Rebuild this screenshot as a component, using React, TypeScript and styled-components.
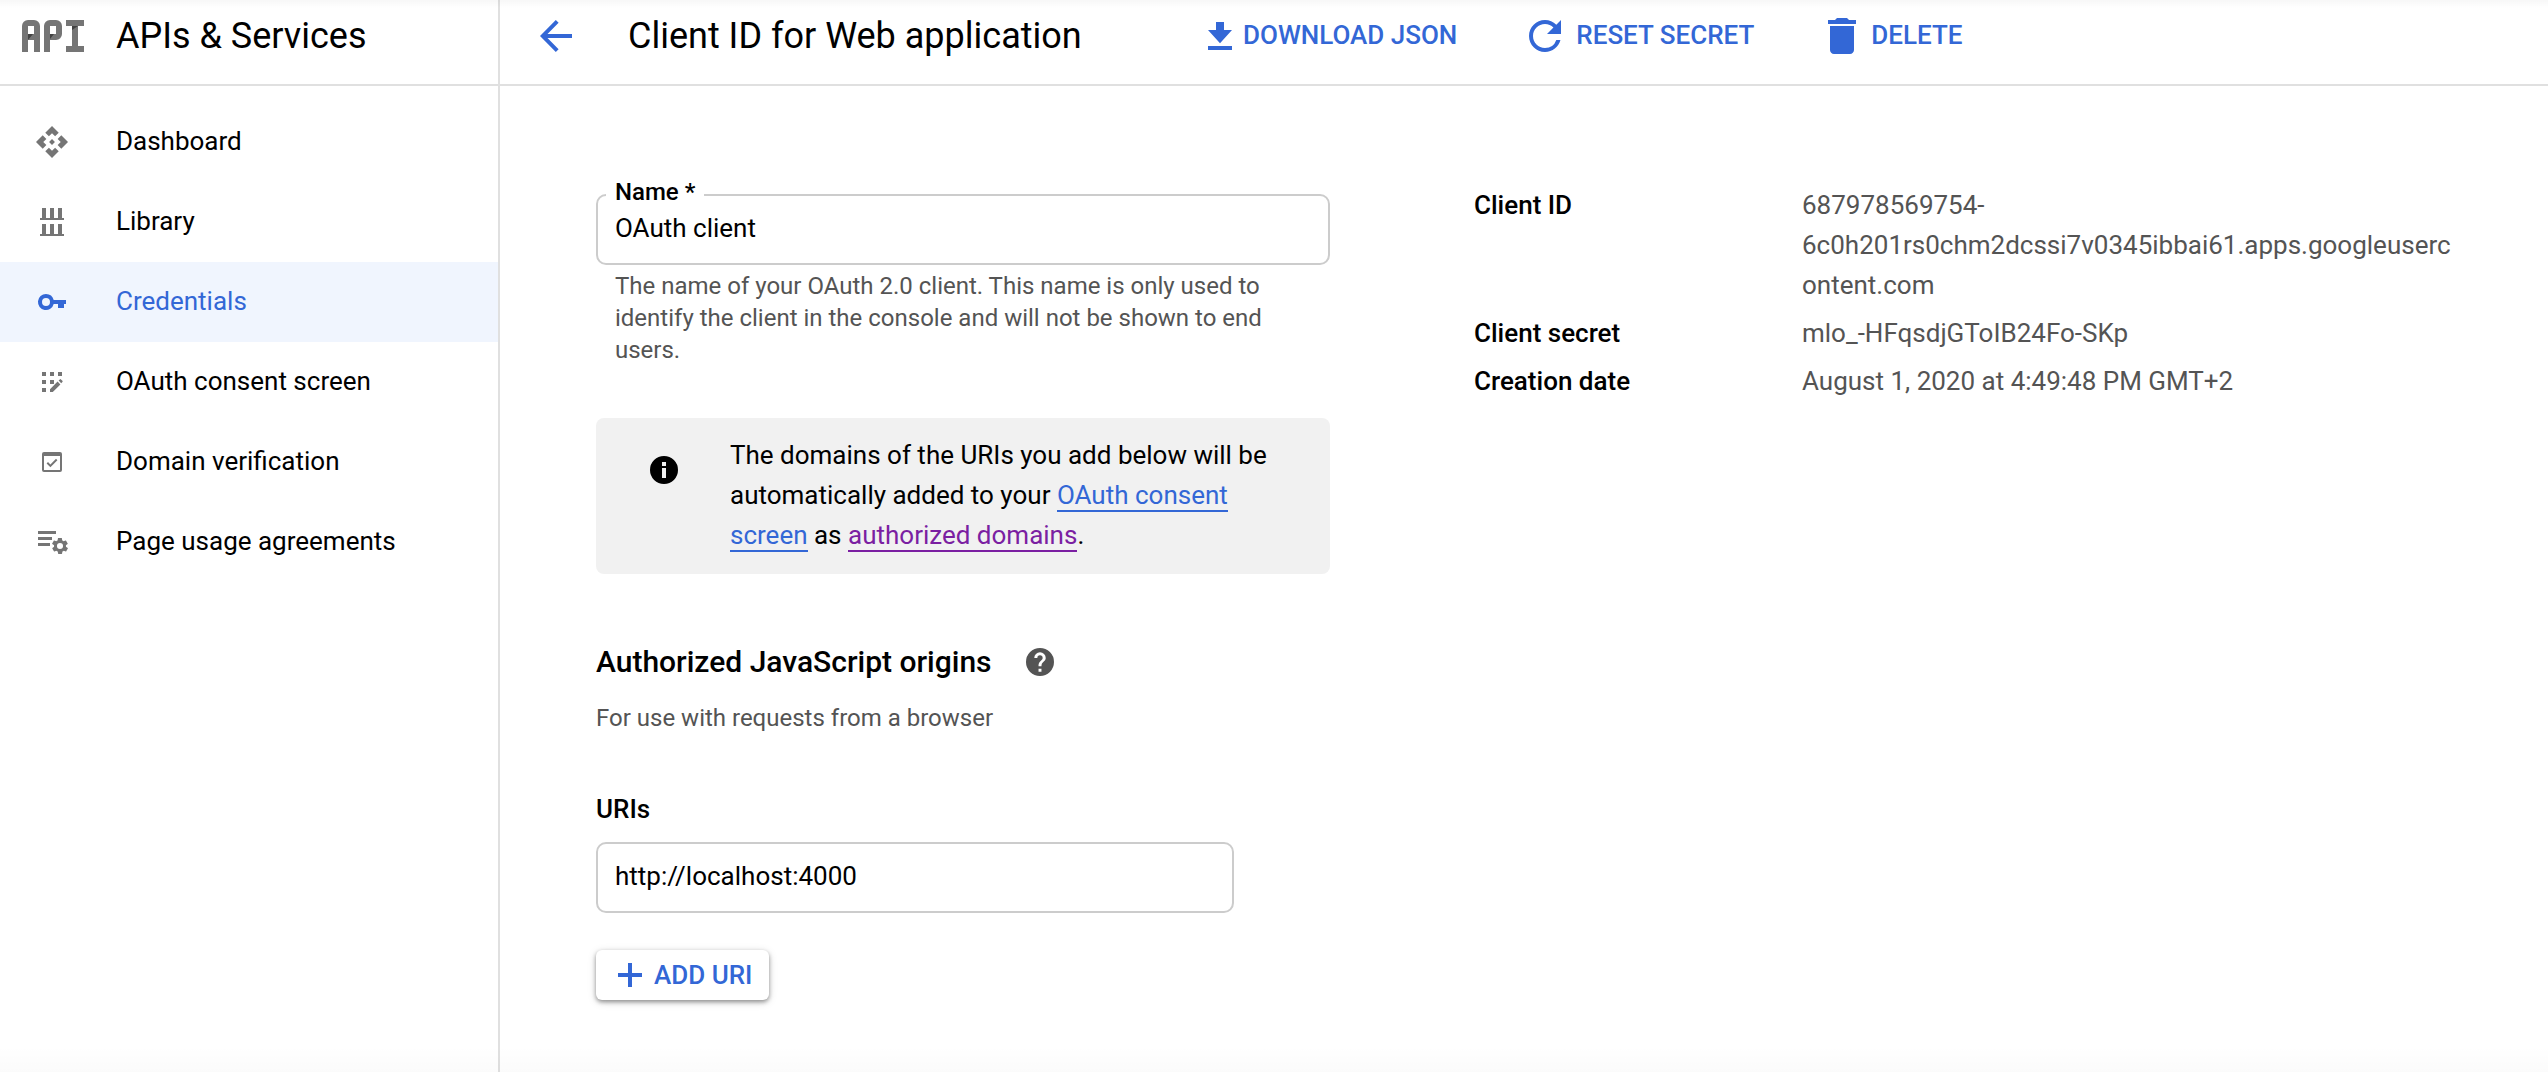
import React from "react";
import styled, { createGlobalStyle, css } from "styled-components";

const BLUE = "#3367d6";
const GREY = "#757575";
const MUTED = "#545454";
const LINE = "#e0e0e0";

const GlobalStyle = createGlobalStyle`
  * { box-sizing: border-box; }
  body {
    margin: 0;
    background: #fff;
    color: #000;
    font-family: Roboto, "Liberation Sans", sans-serif;
    font-size: 26px;
    line-height: 40px;
  }
`;

const Page = styled.div`
  position: relative;
  display: grid;
  grid-template-columns: 500px 1fr;
  height: 1072px;
  overflow: hidden;
`;
const TopShade = styled.div`
  position: absolute;
  inset: 0 0 auto 0;
  height: 8px;
  background: linear-gradient(rgba(0, 0, 0, 0.03), transparent);
`;
const BottomShade = styled.div`
  position: absolute;
  inset: auto 0 0 0;
  height: 26px;
  background: linear-gradient(transparent, rgba(0, 0, 0, 0.015));
`;
const Sidebar = styled.aside`
  border-right: 2px solid ${LINE};
`;
const bar = css`
  display: flex;
  align-items: center;
  height: 86px;
  padding-bottom: 12px;
  border-bottom: 2px solid ${LINE};
`;
const Brand = styled.div`
  ${bar}
  padding-left: 22px;
`;
const BrandName = styled.div`
  margin-left: 32px;
  font-size: 36px;
`;
const Nav = styled.nav`
  padding-top: 16px;
`;
const NavItem = styled.a<{ $active?: boolean }>`
  display: flex;
  align-items: center;
  gap: 46px;
  height: 80px;
  padding: 0 0 0 34px;
  color: ${(p) => (p.$active ? BLUE : "#000")};
  background: ${(p) => (p.$active ? "#f0f5fe" : "transparent")};
  svg { color: ${(p) => (p.$active ? BLUE : GREY)}; }
`;
const NavLabel = styled.span`
  padding-bottom: 2px;
`;
const Icon = styled.svg<{ $size: number }>`
  flex: none;
  display: block;
  width: ${(p) => p.$size}px;
  height: ${(p) => p.$size}px;
  fill: currentColor;
`;
const Logo = styled.svg`
  display: block;
  width: 62px;
  height: 32px;
`;

const Header = styled.header`
  ${bar}
  padding-left: 36px;
  color: ${BLUE};
`;
const Title = styled.h1`
  width: 578px;
  margin: 0 0 0 52px;
  color: #000;
  font-size: 36px;
  font-weight: 400;
`;
const Action = styled.button<{ $gap: number }>`
  display: flex;
  align-items: center;
  gap: ${(p) => p.$gap}px;
  margin: 0 64px 0 0;
  padding: 0;
  border: 0;
  background: none;
  color: inherit;
  font: 500 26px/40px Roboto, sans-serif;
  white-space: nowrap;
`;
const ActionLabel = styled.span`
  padding-bottom: 2px;
`;
const Content = styled.div`
  display: grid;
  grid-template-columns: 734px 1fr;
  column-gap: 144px;
  padding: 99px 0 0 96px;
`;
const Form = styled.form`
  display: flex;
  flex-direction: column;
  align-items: flex-start;
  padding-top: 9px;
`;
const Field = styled.div<{ $width: number }>`
  position: relative;
  width: ${(p) => p.$width}px;
  height: 71px;
  padding: 12px 17px;
  border: 2px solid #ccc;
  border-radius: 10px;
`;
const FieldLabel = styled.label`
  position: absolute;
  left: 8px;
  top: -20px;
  padding: 0 9px;
  background: #fff;
  font-size: 24px;
  font-weight: 500;
  line-height: 32px;
`;
const Help = styled.p`
  width: 690px;
  margin: 5px 0 0 19px;
  color: ${MUTED};
  font-size: 24px;
  line-height: 32px;
`;
const Notice = styled.div`
  display: flex;
  align-items: flex-start;
  gap: 50px;
  width: 734px;
  height: 156px;
  margin-top: 52px;
  padding: 17px 50px 0 52px;
  border-radius: 8px;
  background: #f1f1f1;
  svg { margin-top: 19px; }
`;
const NoticeText = styled.div`
  width: 570px;
`;
const Link = styled.a<{ $visited?: boolean }>`
  border-bottom: 2px solid;
  color: ${(p) => (p.$visited ? "#7b1fa2" : BLUE)};
`;
const SectionHead = styled.div`
  display: flex;
  align-items: center;
  gap: 32px;
  margin-top: 68px;
  svg { color: ${MUTED}; }
`;
const SectionTitle = styled.h2`
  margin: 0;
  font-size: 30px;
  font-weight: 500;
`;
const SectionNote = styled.p`
  margin: 16px 0 0;
  color: ${MUTED};
  font-size: 24px;
`;
const ListLabel = styled.div`
  margin: 51px 0 13px;
  font-weight: 500;
`;
const AddButton = styled.button`
  display: flex;
  align-items: center;
  gap: 12px;
  width: 173px;
  height: 50px;
  margin-top: 37px;
  padding: 0 0 0 22px;
  border: 0;
  border-radius: 6px;
  background: #fff;
  box-shadow: 0 2px 4px rgba(0, 0, 0, 0.38), 0 2px 10px rgba(0, 0, 0, 0.14);
  color: ${BLUE};
  font: 500 26px/40px Roboto, sans-serif;
  white-space: nowrap;
`;
const Details = styled.dl`
  display: grid;
  grid-template-columns: 328px 660px;
  align-content: start;
  row-gap: 8px;
  margin: 0;
`;
const Term = styled.dt`
  font-weight: 500;
`;
const Detail = styled.dd`
  margin: 0;
  color: ${MUTED};
`;

const navItems = [
  {
    label: "Dashboard",
    art: (
      <path
        transform="translate(.55 .55) scale(1.4545)"
        d="M14 12l-2 2-2-2 2-2 2 2zm-2-6l2.12 2.12 2.5-2.5L12 1 7.38 5.62l2.5 2.5L12 6zm-6 6l2.12-2.12-2.5-2.5L1 12l4.62 4.62 2.5-2.5L6 12zm12 0l-2.12 2.12 2.5 2.5L23 12l-4.62-4.62-2.5 2.5L18 12zm-6 6l-2.12-2.12-2.5 2.5L12 23l4.62-4.62-2.5-2.5L12 18z"
      />
    ),
  },
  {
    label: "Library",
    art: (
      <path d="M8 4h4v10h4V4h4v10h4V4h4v10h2v2H6v-2h2zM8 20h4v10h4V20h4v10h4V20h4v10h2v2H6v-2h2z" />
    ),
  },
  {
    label: "Credentials",
    active: true,
    art: (
      <path
        fillRule="evenodd"
        d="M12 10a8 8 0 0 1 7.7 6H32v4h-2v4h-6v-4h-4.3A8 8 0 1 1 12 10zm0 4a4 4 0 1 0 0 8 4 4 0 0 0 0-8z"
      />
    ),
  },
  {
    label: "OAuth consent screen",
    art: (
      <path d="M8 8h4v4H8zM16 8h4v4h-4zM24 8h4v4h-4zM8 16h4v4H8zM16 16h4v4h-4zM8 24h4v4H8zM16 25.2l7.6-7.6 2.8 2.8-7.6 7.6H16zM24.6 16.6l1.2-1.2q.6-.6 1.2 0l1.4 1.4q.6.6 0 1.2l-1.2 1.2z" />
    ),
  },
  {
    label: "Domain verification",
    art: (
      <path
        fillRule="evenodd"
        d="M10 8h16a2 2 0 0 1 2 2v16a2 2 0 0 1-2 2H10a2 2 0 0 1-2-2V10a2 2 0 0 1 2-2zm0 4v14h16V12zm6.4 11.2l-3.8-3.8 1.4-1.4 2.4 2.4 5.6-5.6 1.4 1.4z"
      />
    ),
  },
  {
    label: "Page usage agreements",
    art: (
      <>
        <path d="M4 7h18v3H4zM4 13h14v3H4zM4 19h12v3H4z" />
        <path
          fillRule="evenodd"
          transform="translate(16.4 12.4) scale(.8)"
          d="M19.4 13c0-.3.1-.7.1-1s0-.7-.1-1l2.1-1.6c.2-.2.2-.4.1-.6l-2-3.5c-.1-.2-.4-.3-.6-.2l-2.5 1c-.5-.4-1.1-.7-1.7-1l-.4-2.6c0-.2-.2-.4-.5-.4h-4c-.2 0-.5.2-.5.4l-.4 2.6c-.6.3-1.2.6-1.7 1l-2.5-1c-.2-.1-.5 0-.6.2l-2 3.5c-.1.2-.1.5.1.6L4.6 11c0 .3-.1.7-.1 1s0 .7.1 1l-2.1 1.6c-.2.2-.2.4-.1.6l2 3.5c.1.2.4.3.6.2l2.5-1c.5.4 1.1.7 1.7 1l.4 2.6c0 .2.3.4.5.4h4c.3 0 .5-.2.5-.4l.4-2.6c.6-.3 1.2-.6 1.7-1l2.5 1c.2.1.5 0 .6-.2l2-3.5c.1-.2.1-.5-.1-.6zM12 15.8a3.8 3.8 0 1 1 0-7.6 3.8 3.8 0 0 1 0 7.6z"
        />
      </>
    ),
  },
];

export default function App() {
  return (
    <>
      <GlobalStyle />
      <Page>
        <Sidebar>
          <Brand>
            <Logo viewBox="0 0 62 32" fill={GREY}>
              <path
                fillRule="evenodd"
                d="M0 32V6a6 6 0 0 1 6-6h6a6 6 0 0 1 6 6v26h-6V20H6v12zM6 6v8h6V6zM22 32V6a6 6 0 0 1 6-6h6a6 6 0 0 1 6 6v8a6 6 0 0 1-6 6h-6v12zM28 6v8h6V6zM44 0h18v6h-6v20h6v6H44v-6h6V6h-6z"
              />
              <path fill="#424242" d="M6 14h5l-5 6zM28 14h4l-4 5zM50 6h6l-6 4z" />
            </Logo>
            <BrandName>APIs &amp; Services</BrandName>
          </Brand>
          <Nav>
            {navItems.map((item) => (
              <NavItem key={item.label} $active={item.active}>
                <Icon $size={36} viewBox="0 0 36 36">{item.art}</Icon>
                <NavLabel>{item.label}</NavLabel>
              </NavItem>
            ))}
          </Nav>
        </Sidebar>
        <main>
          <Header>
            <Icon $size={40} viewBox="0 0 40 40">
              <path d="M36 18H11.5L22.6 6.700 19.800 4 4 20l15.800 16 2.800-2.700L11.500 22H36z" />
            </Icon>
            <Title>Client ID for Web application</Title>
            <Action $gap={9}>
              <Icon $size={28} viewBox="0 0 28 28">
                <path d="M10 0h8v8h8L14 21.300 2 8h8zM2 24h24v4H2z" />
              </Icon>
              <ActionLabel>DOWNLOAD JSON</ActionLabel>
            </Action>
            <Action $gap={7}>
              <Icon $size={48} viewBox="0 0 24 24">
                <path d="M17.65 6.35A7.958 7.958 0 0 0 12 4c-4.42 0-7.99 3.58-7.99 8s3.57 8 7.99 8c3.73 0 6.84-2.55 7.73-6h-2.08A5.99 5.99 0 0 1 12 18c-3.31 0-6-2.69-6-6s2.69-6 6-6c1.66 0 3.14.69 4.22 1.78L13 11h7V4l-2.35 2.35z" />
              </Icon>
              <ActionLabel>RESET SECRET</ActionLabel>
            </Action>
            <Action $gap={5}>
              <Icon $size={48} viewBox="0 0 24 24">
                <path d="M6 19c0 1.1.9 2 2 2h8c1.1 0 2-.9 2-2V7H6v12zM19 4h-3.5l-1-1h-5l-1 1H5v2h14V4z" />
              </Icon>
              <ActionLabel>DELETE</ActionLabel>
            </Action>
          </Header>
          <Content>
            <Form>
              <Field $width={734}>
                <FieldLabel>Name *</FieldLabel>
                OAuth client
              </Field>
              <Help>
                The name of your OAuth 2.0 client. This name is only used to
                identify the client in the console and will not be shown to end
                users.
              </Help>
              <Notice>
                <Icon $size={32} viewBox="0 0 32 32">
                  <path
                    fillRule="evenodd"
                    d="M16 2a14 14 0 1 1 0 28 14 14 0 0 1 0-28zm-2 6v4h4V8zm0 6v10h4V14z"
                  />
                </Icon>
                <NoticeText>
                  The domains of the URIs you add below will be automatically
                  added to your <Link>OAuth consent screen</Link> as{" "}
                  <Link $visited>authorized domains</Link>.
                </NoticeText>
              </Notice>
              <SectionHead>
                <SectionTitle>Authorized JavaScript origins</SectionTitle>
                <Icon $size={32} viewBox="0 0 24 24">
                  <path d="M12 1.500a10.500 10.500 0 1 0 0 21 10.500 10.500 0 0 0 0-21zm1.100 17.800h-2.200v-2.200h2.200zm2.100-8l-.9.900c-.8.800-1.200 1.400-1.200 3h-2.200v-.5c0-1.200.5-2.200 1.200-3l1.300-1.300c.4-.4.600-.9.600-1.400a2 2 0 0 0-4 0H7.700a4.300 4.300 0 0 1 8.600 0c0 .9-.4 1.700-1.100 2.300z" />
                </Icon>
              </SectionHead>
              <SectionNote>For use with requests from a browser</SectionNote>
              <ListLabel>URIs</ListLabel>
              <Field $width={638}>http://localhost:4000</Field>
              <AddButton type="button">
                <Icon $size={24} viewBox="0 0 24 24">
                  <path d="M10 0h4v10h10v4H14v10h-4V14H0v-4h10z" />
                </Icon>
                ADD URI
              </AddButton>
            </Form>
            <Details>
              <Term>Client ID</Term>
              <Detail>
                687978569754-
                <br />
                6c0h201rs0chm2dcssi7v0345ibbai61.apps.googleuserc
                <br />
                ontent.com
              </Detail>
              <Term>Client secret</Term>
              <Detail>mlo_-HFqsdjGToIB24Fo-SKp</Detail>
              <Term>Creation date</Term>
              <Detail>August 1, 2020 at 4:49:48 PM GMT+2</Detail>
            </Details>
          </Content>
        </main>
        <TopShade />
        <BottomShade />
      </Page>
    </>
  );
}
